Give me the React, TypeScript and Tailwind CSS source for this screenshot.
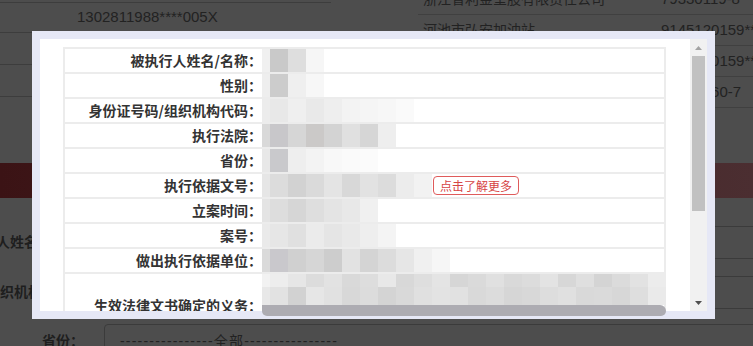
import React from "react";

type Row = { label: string; mosaic: string[]; more?: boolean };

const rows: Row[] = [
  { label: "被执行人姓名/名称：", mosaic: ["#f0f0f0", "#c9c9c9", "#dedede", "#f6f6f6"] },
  { label: "性别：", mosaic: ["#eeeeee", "#cccccc", "#efefef", "#f7f7f7"] },
  {
    label: "身份证号码/组织机构代码：",
    mosaic: ["#ececec", "#e8e8e8", "#efefef", "#e9e9e9", "#eeeeee", "#f3f3f3", "#f5f5f5", "#f7f7f7", "#fafafa"],
  },
  {
    label: "执行法院：",
    mosaic: ["#d9d9d9", "#c8c7ca", "#d6d6d6", "#cbc9c8", "#d3d3d3", "#e0e0e0", "#d6d6d6", "#eeeeee"],
  },
  { label: "省份：", mosaic: ["#e8e8e8", "#c9c9cc", "#eeeeee", "#f3f3f3", "#f8f8f8", "#fafafa", "#fbfbfb"] },
  {
    label: "执行依据文号：",
    mosaic: ["#e6e6e6", "#dcdcdc", "#d2d2d2", "#dadada", "#e4e4e4", "#d8d8d8", "#e2e2e2", "#dcdcdc", "#ececec", "#f2f2f2"],
    more: true,
  },
  { label: "立案时间：", mosaic: ["#e4e4e4", "#dddddd", "#d6d6d6", "#dedede", "#e4e4e4", "#e8e8e8", "#f0f0f0"] },
  { label: "案号：", mosaic: ["#eaeaea", "#e6e6e6", "#e0e0e0", "#ebebeb", "#e5e5e5", "#e9e9e9", "#eeeeee", "#f4f4f4"] },
  {
    label: "做出执行依据单位：",
    mosaic: ["#dadada", "#c9c8cc", "#d0d0d0", "#d6d6d6", "#cdcdcd", "#e2e2e2", "#d4d4d4", "#dcdcdc", "#e6e6e6", "#f0f0f0", "#f6f6f6"],
  },
];

// 打码区域（最后一行，两层）
const lastTop = [
  "#f2f2f2", "#ededed", "#e6e6e6", "#dcdcdc", "#e2e2e2", "#d9d9d9", "#dddddd", "#e8e8e8", "#d8d8d8", "#dedede", "#e4e4e4", "#d6d6d6",
  "#dadada", "#e0e0e0", "#d9d9d9", "#dcdcdc", "#e3e3e3", "#d7d7d7", "#dfdfdf", "#d4d4d4", "#dbdbdb", "#e2e2e2", "#ececec",
];
const lastMid = [
  "#e8e8e8", "#e2e2e2", "#d2d2d2", "#e6e6e6", "#e1e1e1", "#d8d8d8", "#dcdcdc", "#d4d4d4", "#d9d9d9", "#e0e0e0", "#e3e3e3", "#e1e1e1",
  "#d9d9d9", "#dcdcdc", "#d6d6d6", "#d8d8d8", "#dddddd", "#e0e0e0", "#d9d9d9", "#dadada", "#d7d7d7", "#dedede", "#eaeaea",
];

function Mosaic({ colors }: { colors: string[] }) {
  return (
    <div className="flex h-full shrink-0">
      {colors.map((c, i) => (
        <div key={i} className={i === 0 ? "h-full w-[8px]" : "h-full w-[18px]"} style={{ backgroundColor: c }} />
      ))}
    </div>
  );
}

function Scrollbar() {
  return (
    <div className="flex w-[17px] shrink-0 flex-col bg-[#f1f1f1]">
      <div className="flex h-[17px] items-center justify-center">
        <svg width="7" height="4" viewBox="0 0 7 4">
          <path d="M3.5 0L7 4H0z" fill="#a3a3a3" />
        </svg>
      </div>
      <div className="mx-[2px] h-[155px] bg-[#c1c1c1]" />
      <div className="flex-1" />
      <div className="flex h-[17px] items-center justify-center">
        <svg width="7" height="4" viewBox="0 0 7 4">
          <path d="M0 0H7L3.5 4z" fill="#505050" />
        </svg>
      </div>
    </div>
  );
}

function Modal() {
  return (
    <div className="absolute left-[32px] top-[31px] h-[288px] w-[683px] bg-[#e6e8f6] p-2">
      <div className="flex h-full bg-white">
        <div className="flex-1 overflow-hidden pl-[23px] pr-6 pt-2">
          <div className="flex flex-col gap-[2px] bg-[#ececec] p-[2px] font-['Noto_Sans_CJK_SC',sans-serif] text-[14px] font-bold text-[#333]">
            {rows.map((r) => (
              <div key={r.label} className="flex h-[23px] bg-white">
                <div className="flex w-[197px] shrink-0 items-center justify-end whitespace-nowrap">{r.label}</div>
                <div className="flex flex-1 items-center">
                  <Mosaic colors={r.mosaic} />
                  {r.more && (
                    <span className="ml-px rounded-[4px] border border-[#df5b5b] px-[6px] text-[12px] font-normal leading-[17px] text-[#d64545]">
                      点击了解更多
                    </span>
                  )}
                </div>
              </div>
            ))}
            <div className="flex h-[62px] bg-white">
              <div className="flex w-[197px] shrink-0 items-center justify-end whitespace-nowrap">生效法律文书确定的义务：</div>
              <div className="flex flex-1 flex-col">
                <div className="h-[13px]">
                  <Mosaic colors={lastTop} />
                </div>
                <div className="h-[18px]">
                  <Mosaic colors={lastMid} />
                </div>
                <div className="h-[6px] w-[404px] rounded-tr-[6px] bg-[#adacb2]" />
              </div>
            </div>
          </div>
        </div>
        <Scrollbar />
      </div>
      {/* 打码溢出到边框上的部分 */}
      <div className="absolute left-[230px] top-[280px] h-[5px] w-[404px] rounded-b-[6px] bg-[#adacb2]" />
    </div>
  );
}

export default function App() {
  return (
    <div className="relative h-[346px] w-[753px] overflow-hidden bg-[#4d4d4d] font-['Liberation_Sans','Noto_Sans_CJK_SC',sans-serif] text-[#222]">
      {/* 背后的页面（被遮罩） */}
      <div className="flex h-[163px]">
        <div className="w-[331px] shrink-0 pt-[2px]">
          <div className="flex h-[30px] items-center border-t border-[#3d3d3d] pl-[77px] text-[15px]">1302811988****005X</div>
          <div className="h-[32px] border-t border-[#3d3d3d]" />
          <div className="h-[32px] border-t border-[#3d3d3d]" />
          <div className="h-[32px] border-t border-[#3d3d3d]" />
        </div>
        <div className="w-[87px] shrink-0" />
        <div className="flex-1 whitespace-nowrap">
          <div className="-mt-[16px] flex h-[31px] items-center border-b border-[#404040]">
            <span className="w-[243px] pl-[5px] text-[14px]">浙江省利金堂股有限责任公司</span>
            <span className="text-[15px]">79330119-8</span>
          </div>
          <div className="flex h-[31px] items-center border-b border-[#404040]">
            <span className="w-[243px] pl-[5px] text-[14px]">河池市弘安加油站</span>
            <span className="text-[15px]">9145120159**</span>
          </div>
          <div className="flex h-[31px] items-center border-b border-[#404040]">
            <span className="w-[243px] pl-[5px] text-[14px]">河池市金城江区加油站</span>
            <span className="text-[15px]">9145120159**</span>
          </div>
          <div className="flex h-[31px] items-center border-b border-[#404040]">
            <span className="w-[243px] pl-[5px] text-[14px]">广西河池石化有限公司</span>
            <span className="text-[15px]">79330160-7</span>
          </div>
        </div>
      </div>

      <div className="h-[35px] bg-linear-to-r from-[#3b1315] to-[#4b2e31]" />

      <div className="pt-[28px] text-[14px] font-bold text-[#1e1e1e]">
        <div className="flex items-center">
          <div className="flex w-[84px] shrink-0 justify-end whitespace-nowrap">
            <span>被执行人姓名/名称：</span>
          </div>
          <div className="ml-[20px] h-[33px] w-[700px] shrink-0 border border-[#3b3b3b]" />
        </div>
        <div className="mt-[17px] flex items-center">
          <div className="flex w-[84px] shrink-0 justify-end whitespace-nowrap">
            <span>身份证号码/组织机构代码：</span>
          </div>
          <div className="ml-[20px] h-[33px] w-[700px] shrink-0 border border-[#3b3b3b]" />
        </div>
        <div className="mt-[15px] flex items-center">
          <div className="flex w-[84px] shrink-0 justify-end whitespace-nowrap">
            <span>省份：</span>
          </div>
          <div className="ml-[20px] flex h-[34px] w-[700px] shrink-0 items-center rounded-[4px] border border-[#3b3b3b] pl-[15px] text-[14px] font-normal tracking-[1.2px] text-[#222]">
            ----------------全部----------------
          </div>
        </div>
      </div>

      <Modal />
    </div>
  );
}
